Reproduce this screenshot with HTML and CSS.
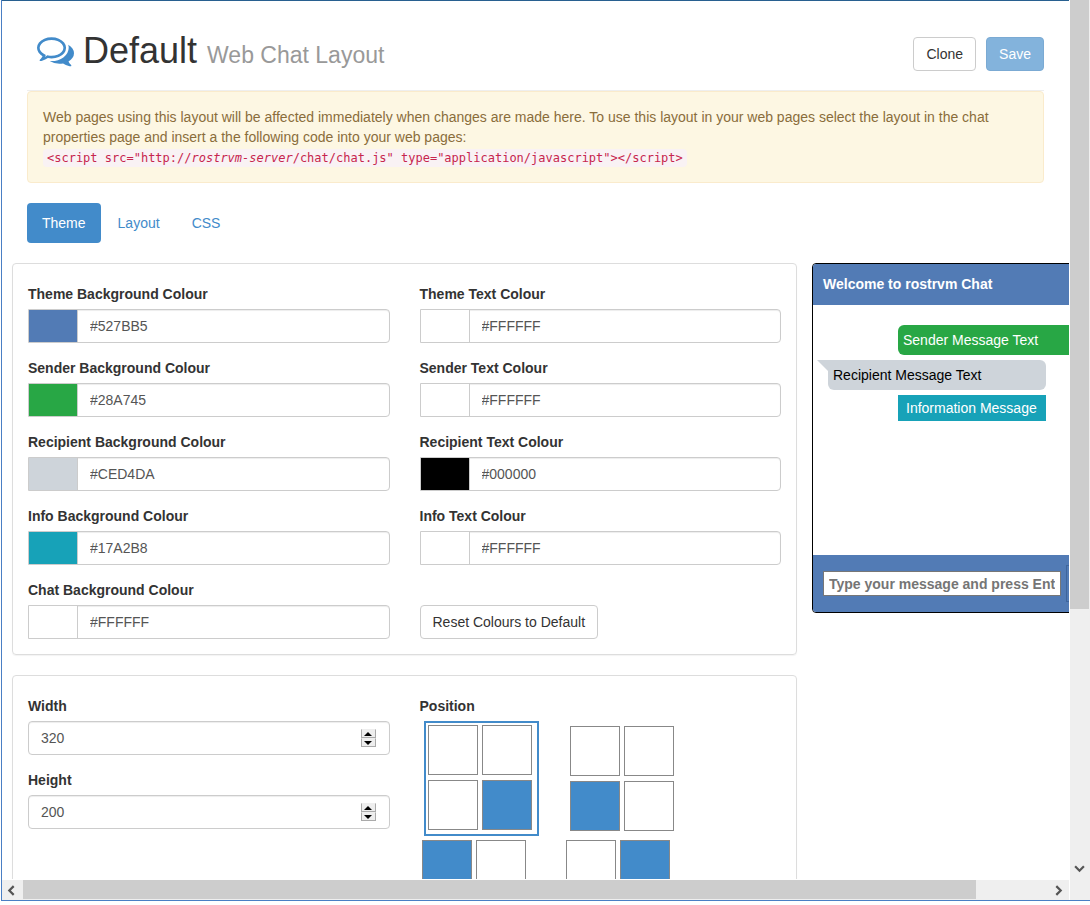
FILE: index.html
```html
<!DOCTYPE html>
<html lang="en">
<head>
<meta charset="utf-8">
<title>Default Web Chat Layout</title>
<link rel="stylesheet" href="styles.css">
</head>
<body>
<div class="frame">
  <main class="viewport">
    <header class="page-header">
      <svg class="logo" viewBox="0 0 1792 1792" aria-hidden="true"><path d="M704 384q-153 0-286 52t-211.500 141-78.500 191q0 82 53 158t149 132l97 56-35 84q34-20 62-39l44-31 53 10q78 14 153 14 153 0 286-52t211.500-141 78.500-191-78.500-191-211.500-141-286-52zm0-128q191 0 353.500 68.500t256.500 186.500 94 257-94 257-256.500 186.500-353.500 68.500q-86 0-176-16-124 88-278 128-36 9-86 16h-3q-11 0-20.500-8t-11.500-21q-1-3-1-6.500t.5-6.500 2-6l2.500-5 3.500-5.500 4-5 4.500-5 4-4.500q5-6 23-25t26-29.500 22.500-29 25-38.500 20.500-44q-124-72-195-177t-71-224q0-139 94-257t256.500-186.500 353.500-68.500zm822 1169q10 24 20.500 44t25 38.500 22.500 29 26 29.500 23 25q1 1 4 4.500t4.500 5 4 5 3.500 5.500l2.500 5 2 6 .5 6.500-1 6.500q-3 14-13 22t-22 7q-50-7-86-16-154-40-278-128-90 16-176 16-271 0-472-132 58 4 88 4 161 0 309-45t264-129q125-92 192-212t67-254q0-77-23-152 129 71 204 178t75 230q0 120-71 224.500t-195 176.500z"/></svg>
      <h1 class="title">Default <small class="subtitle">Web Chat Layout</small></h1>
      <div class="actions">
        <button class="btn" type="button">Clone</button>
        <button class="btn btn-primary" type="button" disabled>Save</button>
      </div>
    </header>

    <div class="alert">
      Web pages using this layout will be affected immediately when changes are made here. To use this layout in your web pages select the layout in the chat properties page and insert a the following code into your web pages:<br>
      <code class="code">&lt;script src="http://<i>rostrvm-server</i>/chat/chat.js" type="application/javascript"&gt;&lt;/script&gt;</code>
    </div>

    <nav class="pills">
      <a class="pill pill-active" href="#theme">Theme</a>
      <a class="pill" href="#layout">Layout</a>
      <a class="pill" href="#css">CSS</a>
    </nav>

    <div class="columns">
      <div class="panels">
        <section class="panel">
          <div class="field">
            <label class="label" for="theme-bg">Theme Background Colour</label>
            <div class="colour"><input class="swatch" type="color" value="#527bb5" aria-label="Pick theme background"><input class="colour-text" id="theme-bg" type="text" value="#527BB5"></div>
          </div>
          <div class="field">
            <label class="label" for="theme-text">Theme Text Colour</label>
            <div class="colour"><input class="swatch" type="color" value="#ffffff" aria-label="Pick theme text"><input class="colour-text" id="theme-text" type="text" value="#FFFFFF"></div>
          </div>
          <div class="field">
            <label class="label" for="sender-bg">Sender Background Colour</label>
            <div class="colour"><input class="swatch" type="color" value="#28a745" aria-label="Pick sender background"><input class="colour-text" id="sender-bg" type="text" value="#28A745"></div>
          </div>
          <div class="field">
            <label class="label" for="sender-text">Sender Text Colour</label>
            <div class="colour"><input class="swatch" type="color" value="#ffffff" aria-label="Pick sender text"><input class="colour-text" id="sender-text" type="text" value="#FFFFFF"></div>
          </div>
          <div class="field">
            <label class="label" for="recipient-bg">Recipient Background Colour</label>
            <div class="colour"><input class="swatch" type="color" value="#ced4da" aria-label="Pick recipient background"><input class="colour-text" id="recipient-bg" type="text" value="#CED4DA"></div>
          </div>
          <div class="field">
            <label class="label" for="recipient-text">Recipient Text Colour</label>
            <div class="colour"><input class="swatch" type="color" value="#000000" aria-label="Pick recipient text"><input class="colour-text" id="recipient-text" type="text" value="#000000"></div>
          </div>
          <div class="field">
            <label class="label" for="info-bg">Info Background Colour</label>
            <div class="colour"><input class="swatch" type="color" value="#17a2b8" aria-label="Pick info background"><input class="colour-text" id="info-bg" type="text" value="#17A2B8"></div>
          </div>
          <div class="field">
            <label class="label" for="info-text">Info Text Colour</label>
            <div class="colour"><input class="swatch" type="color" value="#ffffff" aria-label="Pick info text"><input class="colour-text" id="info-text" type="text" value="#FFFFFF"></div>
          </div>
          <div class="field">
            <label class="label" for="chat-bg">Chat Background Colour</label>
            <div class="colour"><input class="swatch" type="color" value="#ffffff" aria-label="Pick chat background"><input class="colour-text" id="chat-bg" type="text" value="#FFFFFF"></div>
          </div>
          <div class="field field-button">
            <button class="btn" type="button">Reset Colours to Default</button>
          </div>
        </section>

        <section class="panel">
          <div class="sizes">
            <div class="field">
              <label class="label" for="width">Width</label>
              <div class="number">
                <input class="number-text" id="width" type="number" value="320">
                <div class="spin">
                  <button class="spin-btn" type="button" aria-label="Increase width"><svg class="spin-icon" viewBox="0 0 8 4"><path d="M4 0 8 4H0z"/></svg></button>
                  <button class="spin-btn" type="button" aria-label="Decrease width"><svg class="spin-icon" viewBox="0 0 8 4"><path d="M0 0h8L4 4z"/></svg></button>
                </div>
              </div>
            </div>
            <div class="field">
              <label class="label" for="height">Height</label>
              <div class="number">
                <input class="number-text" id="height" type="number" value="200">
                <div class="spin">
                  <button class="spin-btn" type="button" aria-label="Increase height"><svg class="spin-icon" viewBox="0 0 8 4"><path d="M4 0 8 4H0z"/></svg></button>
                  <button class="spin-btn" type="button" aria-label="Decrease height"><svg class="spin-icon" viewBox="0 0 8 4"><path d="M0 0h8L4 4z"/></svg></button>
                </div>
              </div>
            </div>
          </div>
          <div class="position" role="radiogroup" aria-labelledby="position-label">
            <span class="label" id="position-label">Position</span>
            <div class="options options-bottom">
              <label class="option"><input class="option-input" type="radio" name="position" aria-label="Bottom right" checked><span class="cells"><span class="cell"></span><span class="cell"></span><span class="cell"></span><span class="cell cell-on"></span></span></label>
              <label class="option"><input class="option-input" type="radio" name="position" aria-label="Bottom left"><span class="cells"><span class="cell"></span><span class="cell"></span><span class="cell cell-on"></span><span class="cell"></span></span></label>
            </div>
            <div class="options options-top">
              <label class="option"><input class="option-input" type="radio" name="position" aria-label="Top left"><span class="cells"><span class="cell cell-on"></span><span class="cell"></span><span class="cell"></span><span class="cell"></span></span></label>
              <label class="option"><input class="option-input" type="radio" name="position" aria-label="Top right"><span class="cells"><span class="cell"></span><span class="cell cell-on"></span><span class="cell"></span><span class="cell"></span></span></label>
            </div>
          </div>
        </section>
      </div>

      <aside class="preview">
        <div class="chat">
          <div class="chat-head">Welcome to rostrvm Chat</div>
          <div class="chat-body">
            <div class="msg msg-sender">Sender Message Text</div>
            <div class="msg msg-recipient">Recipient Message Text</div>
            <div class="msg-info">Information Message</div>
          </div>
          <div class="chat-foot">
            <input class="chat-input" type="text" aria-label="Message" placeholder="Type your message and press Enter">
            <button class="chat-send" type="button" aria-label="Send"></button>
          </div>
        </div>
      </aside>
    </div>
  </main>

  <div class="vbar">
    <div class="vthumb"></div>
    <svg class="arrow" viewBox="0 0 10 10" aria-hidden="true"><path d="M1 3l4 4 4-4"/></svg>
  </div>
  <div class="hbar">
    <svg class="arrow" viewBox="0 0 10 10" aria-hidden="true"><path d="M7 1L3 5l4 4"/></svg>
    <div class="htrack"><div class="hthumb"></div></div>
    <svg class="arrow" viewBox="0 0 10 10" aria-hidden="true"><path d="M3 1l4 4-4 4"/></svg>
  </div>
</div>
</body>
</html>
```

FILE: styles.css
```css
*, *::before, *::after { box-sizing: border-box; }

body {
  margin: 0;
  background: #fff;
  color: #333;
  font: 14px/20px "Liberation Sans", Arial, sans-serif;
}

input, button { font: inherit; }

/* Window frame and scroll bars */
.frame {
  display: grid;
  grid-template: minmax(0, 1fr) 20px / minmax(0, 1fr) 20px;
  column-gap: 1px;
  row-gap: 1px;
  height: calc(100vh - 4px);
  margin-left: 1px;
  border-left: 1px solid #4a7fc4;
  border-bottom: 1px solid #4a7fc4;
  overflow: hidden;
}
.viewport { overflow: hidden; border-top: 1px solid #286090; }
.vbar {
  grid-area: 1 / 2 / 3 / 3;
  display: flex;
  flex-direction: column;
  justify-content: space-between;
  align-items: center;
  padding: 0 1px 26px 0;
  background: #efefef;
}
.vthumb { width: 100%; height: 609px; background: #cdcdcd; }
.hbar { display: flex; align-items: center; gap: 5px; padding: 0 5px 0 4px; background: #efefef; }
.htrack { flex: 1; align-self: stretch; padding-left: 1px; }
.hthumb { width: 93%; height: 19px; background: #cdcdcd; }
.arrow { width: 11px; height: 11px; fill: none; stroke: #555; stroke-width: 2; }

/* Header */
.page-header {
  display: flex;
  align-items: flex-end;
  margin: 0 25px;
  padding: 30px 0 19px 10px;
  border-bottom: 1px solid #eee;
}
.logo { width: 37px; height: 37px; margin: 0 9px 2px 0; fill: #428bca; }
.title { flex: 1; margin: 0; font-size: 36px; font-weight: 400; line-height: 40px; }
.subtitle { color: #999; font-size: 23px; line-height: 24px; }
.actions { display: flex; gap: 10px; }
.btn {
  height: 34px;
  padding: 0 12px;
  border: 1px solid #ccc;
  border-radius: 4px;
  background: #fff;
  color: #333;
}
.btn-primary { border-color: #357ebd; background: #428bca; color: #fff; opacity: 0.65; }

/* Notice */
.alert {
  margin: 0 25px 20px;
  padding: 15px;
  border: 1px solid #faebcc;
  border-radius: 4px;
  background: #fdf7e3;
  color: #8a6d3b;
}
.code {
  padding: 2px 4px;
  border-radius: 4px;
  background: #f9f2f4;
  color: #c7254e;
  font: 12px/16px "DejaVu Sans Mono", monospace;
}

/* Tabs */
.pills { display: flex; gap: 2px; margin: 0 25px 20px; }
.pill { padding: 10px 15px; border-radius: 4px; color: #428bca; text-decoration: none; }
.pill-active { background: #428bca; color: #fff; }

/* Panels */
.columns { display: grid; grid-template-columns: minmax(0, 1fr) 257px; gap: 15px; padding-left: 10px; }
.panels { display: flex; flex-direction: column; gap: 20px; }
.panel {
  display: grid;
  grid-template-columns: 1fr 1fr;
  column-gap: 30px;
  padding: 20px 15px 0;
  border: 1px solid #ddd;
  border-radius: 4px;
  box-shadow: 0 1px 1px rgba(0, 0, 0, 0.05);
}
.field { display: flex; flex-direction: column; gap: 5px; margin-bottom: 15px; }
.field-button { justify-content: flex-end; align-items: flex-start; }
.label { font-weight: 700; }
.colour, .number {
  display: flex;
  height: 34px;
  border: 1px solid #ccc;
  border-radius: 4px;
  box-shadow: inset 0 1px 1px rgba(0, 0, 0, 0.075);
}
.colour { border-radius: 0 4px 4px 0; }
.swatch {
  width: 49px;
  height: 32px;
  padding: 0;
  border: 0;
  border-right: 1px solid #ccc;
  background: none;
  appearance: none;
}
.swatch::-webkit-color-swatch-wrapper { padding: 0; }
.swatch::-webkit-color-swatch { border: 0; border-radius: 0; }
.colour-text, .number-text {
  flex: 1;
  min-width: 0;
  padding: 0 12px;
  border: 0;
  background: none;
  color: #555;
}
.number { align-items: center; padding-right: 13px; }
.number-text { appearance: textfield; }
.number-text::-webkit-inner-spin-button { display: none; }
.spin { display: flex; flex-direction: column; width: 15px; }
.spin-btn {
  display: flex;
  align-items: center;
  justify-content: center;
  height: 9px;
  padding: 0;
  border: 1px solid #aaa;
  border-top-color: #eee;
  background: #eee;
}
.spin-icon { width: 8px; height: 4px; fill: #000; }

/* Position picker */
.position { display: flex; flex-direction: column; }
.options { display: flex; align-items: center; }
.options-bottom { gap: 31px; margin: 5px 0 4px; padding-left: 4px; }
.options-top { gap: 40px; padding-left: 2px; }
.option { display: flex; }
.option:has(:checked) { padding: 2px 5px 4px 2px; border: 2px solid #428bca; }
.option-input { width: 0; height: 0; margin: 0; appearance: none; }
.cells { display: grid; grid-template-columns: 50px 50px; gap: 5px 4px; }
.cell { height: 50px; border: 1px solid #888; }
.cell-on { background: #428bca; }

/* Chat preview */
.preview { overflow: hidden; }
.chat { width: 320px; border: 1px solid #000; border-radius: 4px; overflow: hidden; }
.chat-head { padding: 10px; border-bottom: 1px solid #527bb5; background: #527bb5; color: #fff; font-weight: 700; }
.chat-body { display: flex; flex-direction: column; gap: 5px; height: 250px; padding: 20px 15px; }
.msg { padding: 5px; border-radius: 6px; }
.msg-sender { margin-left: 70px; background: #28a745; color: #fff; }
.msg-recipient { position: relative; width: 218px; border-top-left-radius: 0; background: #ced4da; color: #000; }
.msg-recipient::before {
  content: "";
  position: absolute;
  top: 0;
  left: -11px;
  border-top: 11px solid #ced4da;
  border-left: 11px solid transparent;
}
.msg-info { width: 148px; margin-left: 70px; padding: 3px 8px; background: #17a2b8; color: #fff; }
.chat-foot { display: flex; align-items: center; gap: 5px; padding: 10px; background: #527bb5; }
.chat-input {
  width: 238px;
  height: 25px;
  padding: 0 5px;
  border: 1px solid #777;
  background: #fff;
  font-weight: 700;
}
.chat-input::placeholder { color: #757575; }
.chat-send { flex: 1; height: 37px; padding: 0; border: 1px solid #3e659c; background: #527bb5; }
```
